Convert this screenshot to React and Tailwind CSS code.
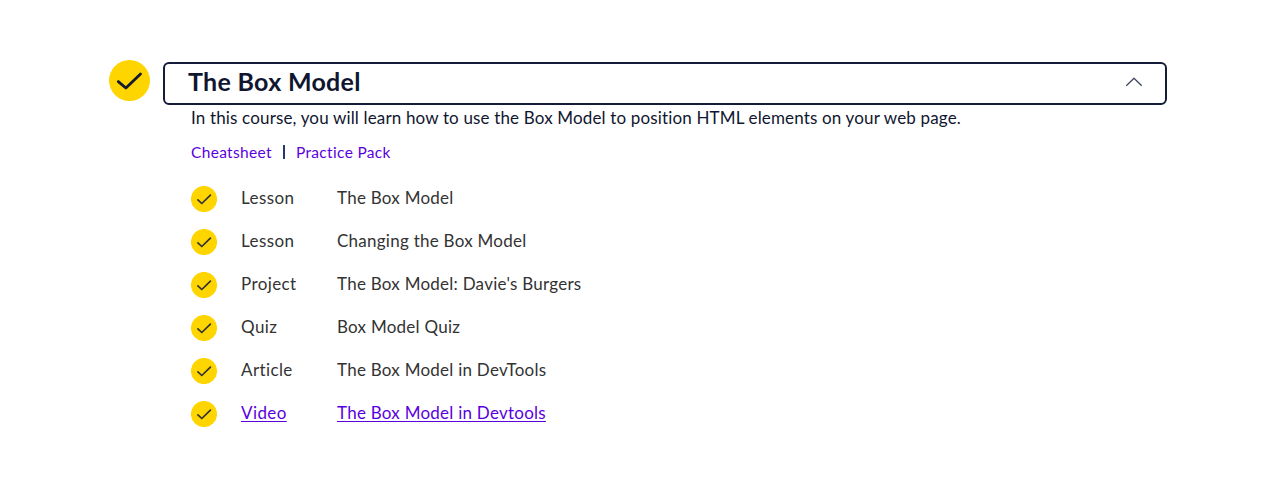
const items = [
  { type: "Lesson", title: "The Box Model" },
  { type: "Lesson", title: "Changing the Box Model" },
  { type: "Project", title: "The Box Model: Davie's Burgers" },
  { type: "Quiz", title: "Box Model Quiz" },
  { type: "Article", title: "The Box Model in DevTools" },
  { type: "Video", title: "The Box Model in Devtools", active: true },
];

function SmallCheck() {
  return (
    <svg className="h-[26px] w-[26px] shrink-0" viewBox="0 0 26 26" fill="none">
      <circle cx="13" cy="13" r="13.1" fill="#ffd500" />
      <path d="M6.9 13.8 10.8 17.5 19.4 9.1" stroke="#333" strokeWidth="1.7" strokeLinecap="round" strokeLinejoin="round" />
    </svg>
  );
}

function BigCheck() {
  return (
    <svg className="-mt-[3px] h-[42px] w-[42px] shrink-0" viewBox="0 0 42 42" fill="none">
      <circle cx="20.5" cy="21.5" r="20.5" fill="#ffd500" />
      <path d="M9.3 22.6 16.9 29 31.5 14.9" stroke="#151a2e" strokeWidth="2.8" strokeLinecap="round" strokeLinejoin="round" />
    </svg>
  );
}

export default function App() {
  return (
    <main className="h-[481px] w-full overflow-hidden bg-white pt-[62px] pl-[109px] font-['Lato',sans-serif] text-[#10162f]">
      <div className="flex h-[43px] items-start">
        <BigCheck />
        <button className="ml-3 flex h-[43px] w-[1004px] items-center justify-between rounded-[6px] border-2 border-[#141c3a] pr-[22px] pl-[23px]">
          <h2 className="-mt-[6px] text-[25px] leading-8 font-bold tracking-[0.3px] whitespace-nowrap">The Box Model</h2>
          <svg className="-mt-[3px] h-4 w-[18px]" viewBox="0 0 18 16" fill="none">
            <path d="M1.3 11.8 9 4.2 16.7 11.8" stroke="#3b415b" strokeWidth="1.2" strokeLinejoin="round" />
          </svg>
        </button>
      </div>
      <section className="ml-[82px]">
        <p className="mt-[1px] h-6 text-[17px] leading-6 tracking-[0.155px] whitespace-nowrap">
          In this course, you will learn how to use the Box Model to position HTML elements on your web page.
        </p>
        <div className="mt-[10px] flex h-6 items-center text-[15.5px] leading-6 tracking-[0.33px] text-[#5a00e0]">
          <a className="w-[92px]">Cheatsheet</a>
          <span className="h-[14px] w-[2px] bg-[#223c66]" />
          <a className="ml-[11px]">Practice Pack</a>
        </div>
        <ul className="mt-[13px] text-[17px] leading-6 tracking-[0.25px] text-[#333]">
          {items.map(({ type, title, active }) => (
            <li key={title} className={active ? "flex h-[43px] items-center text-[#5a00e0] underline decoration-1 underline-offset-[2px]" : "flex h-[43px] items-center"}>
              <SmallCheck />
              <span className="ml-6 w-24 pb-[2px] tracking-[0.4px]">{type}</span>
              <span className="pb-[2px] whitespace-nowrap">{title}</span>
            </li>
          ))}
        </ul>
      </section>
    </main>
  );
}
